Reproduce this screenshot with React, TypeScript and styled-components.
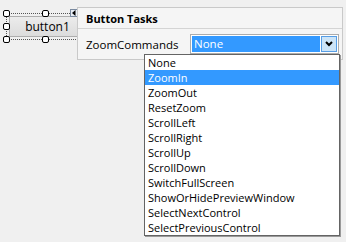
import React from "react";
import styled, { createGlobalStyle } from "styled-components";

const GlobalStyle = createGlobalStyle`
  html, body { margin: 0; padding: 0; }
  body {
    background: #f0f0f0;
    font-family: "Open Sans", "Segoe UI", sans-serif;
    font-size: 11.5px;
    color: #000;
  }
`;

const Page = styled.div`
  width: 346px;
  height: 242px;
  display: flex;
  align-items: flex-start;
  padding-top: 7px;
  box-sizing: border-box;
  overflow: hidden;
`;

const Designer = styled.div`
  width: 77px;
  flex: none;
  padding-top: 6px;
  padding-left: 6px;
  box-sizing: border-box;
`;

const Selection = styled.div`
  position: relative;
  width: 80px;
  height: 27px;
  border-top: 1px dotted #555;
  border-bottom: 1px dotted #555;
  border-left: 1px dotted #555;
  box-sizing: border-box;
  padding: 2px 0 2px 2px;
`;

const DesignButton = styled.div`
  height: 100%;
  background: linear-gradient(#ececec, #dcdcdc);
  border: 1px solid #adadad;
  box-sizing: border-box;
  display: flex;
  align-items: center;
  justify-content: center;
  font-size: 12px;
  color: #000;
`;

const Handle = styled.span<{ $x: number; $y: number }>`
  position: absolute;
  left: ${(p) => p.$x}px;
  top: ${(p) => p.$y}px;
  width: 7px;
  height: 7px;
  box-sizing: border-box;
  border: 1px solid #000;
  border-radius: 2px;
  background: #fff;
`;

const SmartTag = styled.span`
  position: absolute;
  left: 63px;
  top: -5px;
  width: 8px;
  height: 8px;
  box-sizing: border-box;
  border: 1px solid #7a8aa0;
  background: #e8eef6;
  display: flex;
  align-items: center;
  justify-content: center;
`;

const Panel = styled.div`
  position: relative;
  z-index: 1;
  width: 266px;
  flex: none;
  background: #f5f5f5;
  border: 1px solid #c9c9c9;
  box-sizing: border-box;
`;

const Header = styled.div`
  height: 20px;
  padding-left: 8px;
  display: flex;
  align-items: center;
  font-weight: bold;
  font-size: 11px;
  border-bottom: 1px solid #d4d4d4;
`;

const Row = styled.div`
  display: flex;
  align-items: center;
  height: 30px;
  padding-left: 8px;
  padding-right: 3px;
  gap: 9px;
`;

const Label = styled.span`
  flex: none;
  width: 95px;
`;

const Combo = styled.div`
  width: 150px;
  height: 20px;
  box-sizing: border-box;
  border: 1px solid #acacac;
  background: #fff;
  padding: 1px;
  display: flex;
  gap: 1px;
`;

const ComboValue = styled.div`
  flex: 1;
  background: #3399ff;
  color: #fff;
  padding-left: 2px;
  display: flex;
  align-items: center;
  line-height: 1;
`;

const ComboButton = styled.div`
  width: 16px;
  box-sizing: border-box;
  border: 1px solid #569de5;
  background: #cce4f7;
  display: flex;
  align-items: center;
  justify-content: center;
`;

const List = styled.ul`
  position: absolute;
  left: 66px;
  top: 46px;
  width: 196px;
  margin: 0;
  padding: 0;
  list-style: none;
  background: #fff;
  border: 1px solid #646464;
  box-shadow: 1px 1px 0 #9a9a9a;
  box-sizing: border-box;
  font-size: 11px;
`;

const Item = styled.li<{ $selected?: boolean }>`
  height: 15px;
  line-height: 15px;
  padding-left: 3px;
  white-space: nowrap;
  background: ${(p) => (p.$selected ? "#3399ff" : "transparent")};
  color: ${(p) => (p.$selected ? "#fff" : "#000")};
`;

const items = [
  "None",
  "ZoomIn",
  "ZoomOut",
  "ResetZoom",
  "ScrollLeft",
  "ScrollRight",
  "ScrollUp",
  "ScrollDown",
  "SwitchFullScreen",
  "ShowOrHidePreviewWindow",
  "SelectNextControl",
  "SelectPreviousControl",
];

export default function App() {
  return (
    <>
      <GlobalStyle />
      <Page>
        <Designer>
          <Selection>
            <DesignButton>button1</DesignButton>
            <Handle $x={-4} $y={-4} />
            <Handle $x={35} $y={-4} />
            <Handle $x={-4} $y={9} />
            <Handle $x={-4} $y={22} />
            <Handle $x={35} $y={22} />
            <SmartTag>
              <svg width="4" height="6" viewBox="0 0 4 6">
                <path d="M3.5 0 L0 3 L3.5 6 Z" fill="#000" />
              </svg>
            </SmartTag>
          </Selection>
        </Designer>
        <Panel>
          <Header>Button Tasks</Header>
          <Row>
            <Label>ZoomCommands</Label>
            <Combo>
              <ComboValue>None</ComboValue>
              <ComboButton>
                <svg width="8" height="6" viewBox="0 0 8 6">
                  <path d="M1 1 L4 4 L7 1" stroke="#000" strokeWidth="2" fill="none" />
                </svg>
              </ComboButton>
            </Combo>
          </Row>
          <List>
            {items.map((it) => (
              <Item key={it} $selected={it === "ZoomIn"}>
                {it}
              </Item>
            ))}
          </List>
        </Panel>
      </Page>
    </>
  );
}
